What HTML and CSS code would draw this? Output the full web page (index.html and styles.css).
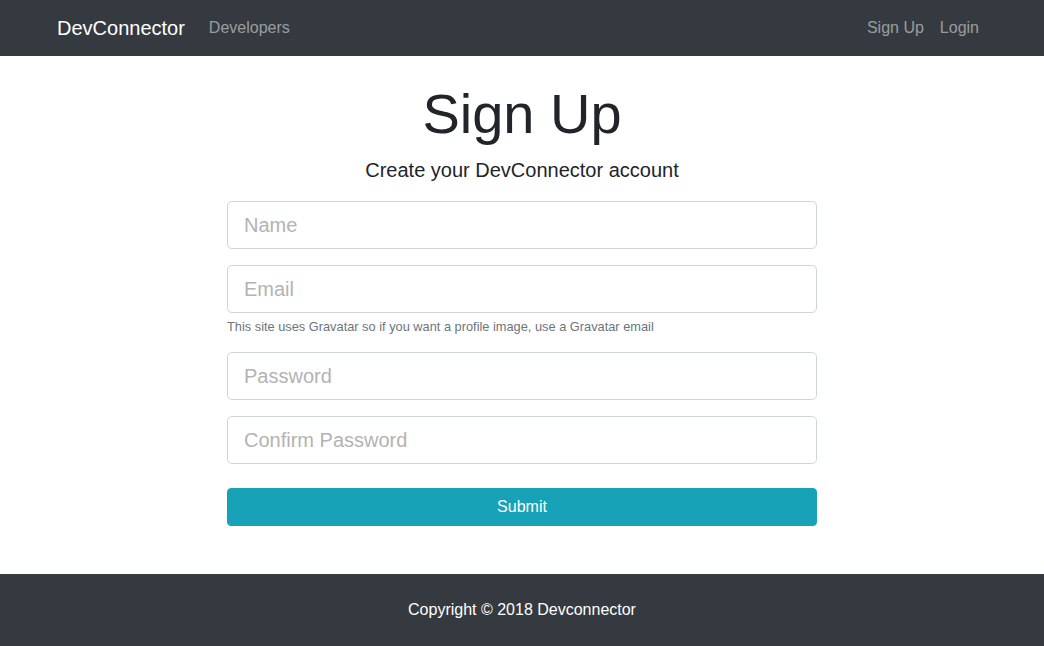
FILE: index.html
```html
<!DOCTYPE html>
<html lang="en">
<head>
<meta charset="utf-8">
<title>DevConnector</title>
<link rel="stylesheet" href="styles.css">
</head>
<body>
<nav class="navbar">
  <div class="container nav-inner">
    <div class="nav-left">
      <a class="brand" href="#">DevConnector</a>
      <a class="nav-link" href="#">Developers</a>
    </div>
    <div class="nav-right">
      <a class="nav-link" href="#">Sign Up</a>
      <a class="nav-link" href="#">Login</a>
    </div>
  </div>
</nav>
<main class="register">
  <div class="form-col">
    <h1 class="display">Sign Up</h1>
    <p class="lead">Create your DevConnector account</p>
    <form class="form">
      <div class="form-group"><input class="input" type="text" placeholder="Name"></div>
      <div class="form-group">
        <input class="input" type="email" placeholder="Email">
        <small class="form-text">This site uses Gravatar so if you want a profile image, use a Gravatar email</small>
      </div>
      <div class="form-group"><input class="input" type="password" placeholder="Password"></div>
      <div class="form-group"><input class="input" type="password" placeholder="Confirm Password"></div>
      <button class="submit" type="button">Submit</button>
    </form>
  </div>
</main>
<footer class="footer">Copyright © 2018 Devconnector</footer>
</body>
</html>
```
FILE: styles.css
```css
* { box-sizing: border-box; }
html, body { margin: 0; padding: 0; }
body {
  font-family: "Liberation Sans", Arial, sans-serif;
  font-size: 16px;
  line-height: 1.5;
  color: #212529;
  background: #fff;
}
a { text-decoration: none; }
.navbar {
  background: #343a40;
  padding: 8px 0;
  margin-bottom: 24px;
}
.container {
  width: 960px;
  margin: 0 auto;
  padding: 0 15px;
}
.nav-inner {
  display: flex;
  justify-content: space-between;
  align-items: center;
}
.nav-left, .nav-right { display: flex; align-items: center; }
.brand {
  color: #fff;
  font-size: 20px;
  line-height: 30px;
  padding: 5px 0;
  margin-right: 16px;
}
.nav-link {
  color: rgba(255,255,255,.5);
  padding: 8px;
  line-height: 24px;
}
.register { display: flex; justify-content: center; }
.form-col { width: 590px; }
.display {
  font-size: 56px;
  font-weight: 300;
  line-height: 1.2;
  text-align: center;
  margin: 0 0 8px;
}
.lead {
  font-size: 20px;
  font-weight: 300;
  text-align: center;
  margin: 0 0 16px;
}
.form { margin: 0; }
.form-group { margin-bottom: 16px; }
.input {
  display: block;
  width: 100%;
  height: 48px;
  padding: 8px 16px;
  font-family: inherit;
  font-size: 20px;
  line-height: 1.5;
  color: #495057;
  background: #fff;
  border: 1px solid #ced4da;
  border-radius: 4.8px;
  outline: none;
}
.input::placeholder { color: #b3b3b3; opacity: 1; }
.form-text {
  display: block;
  margin-top: 4px;
  font-size: 12.8px;
  color: #6c757d;
}
.submit {
  display: block;
  width: 100%;
  margin-top: 24px;
  height: 38px;
  padding: 6px 12px;
  font-family: inherit;
  font-size: 16px;
  line-height: 1.5;
  color: #fff;
  background: #17a2b8;
  border: 1px solid #17a2b8;
  border-radius: 4px;
}
.footer {
  margin-top: 48px;
  background: #343a40;
  color: #fff;
  padding: 24px;
  text-align: center;
}
```
